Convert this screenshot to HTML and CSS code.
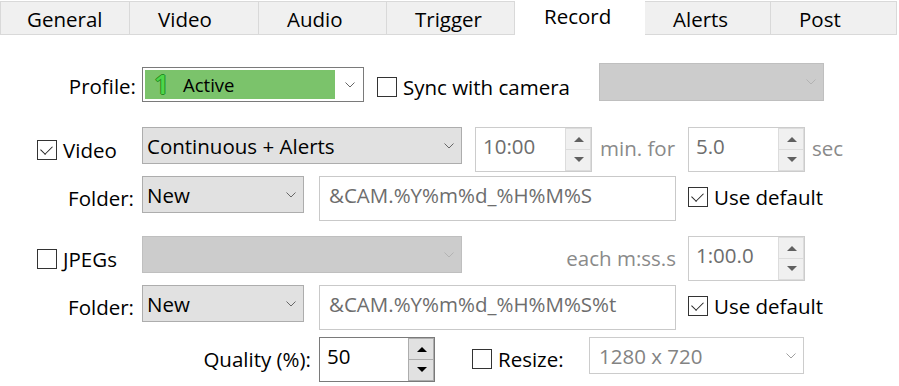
FILE: index.html
```html
<!DOCTYPE html>
<html lang="en">
<head>
    <meta charset="UTF-8">
    <title>Record</title>
    <link rel="stylesheet" href="styles.css">
</head>
<body>
    <div class="tabs">
        <div class="tab first">General</div>
        <div class="tab">Video</div>
        <div class="tab">Audio</div>
        <div class="tab">Trigger</div>
        <div class="tab active">Record</div>
        <div class="tab">Alerts</div>
        <div class="tab">Post</div>
    </div>

    <div class="panel">
        <!-- profile -->
        <div class="row row-profile">
            <div class="cell-label">Profile:</div>
            <div class="select profile">
                <div class="profile-fill"><span class="profile-num">1</span>Active</div>
                <svg class="chev" width="10" height="6" viewBox="0 0 10 6"><polyline points="0.5,0.5 5,5 9.5,0.5" fill="none" stroke="currentColor"/></svg>
            </div>
            <label class="check sync"><span class="box"></span>Sync with camera</label>
            <div class="select disabled camera">
                <span></span>
                <svg class="chev" width="10" height="6" viewBox="0 0 10 6"><polyline points="0.5,0.5 5,5 9.5,0.5" fill="none" stroke="currentColor"/></svg>
            </div>
        </div>

        <!-- video -->
        <div class="row row-video">
            <div class="cell-check"><label class="check"><span class="box checked"></span>Video</label></div>
            <div class="select wide"><span>Continuous + Alerts</span>
                <svg class="chev" width="10" height="6" viewBox="0 0 10 6"><polyline points="0.5,0.5 5,5 9.5,0.5" fill="none" stroke="currentColor"/></svg>
            </div>
            <div class="spin dim s-time"><span class="spin-val">10:00</span>
                <div class="spin-btns"><div class="btn up"></div><div class="btn down"></div></div>
            </div>
            <div class="gray min-for">min. for</div>
            <div class="spin dim"><span class="spin-val">5.0</span>
                <div class="spin-btns"><div class="btn up"></div><div class="btn down"></div></div>
            </div>
            <div class="gray sec">sec</div>
        </div>

        <div class="row row-folder">
            <div class="cell-label">Folder:</div>
            <div class="select short"><span>New</span>
                <svg class="chev" width="10" height="6" viewBox="0 0 10 6"><polyline points="0.5,0.5 5,5 9.5,0.5" fill="none" stroke="currentColor"/></svg>
            </div>
            <div class="field">&amp;CAM.%Y%m%d_%H%M%S</div>
            <label class="check use-def"><span class="box checked"></span>Use default</label>
        </div>

        <!-- jpegs -->
        <div class="row row-jpeg">
            <div class="cell-check"><label class="check"><span class="box"></span>JPEGs</label></div>
            <div class="select wide disabled"><span></span>
                <svg class="chev" width="10" height="6" viewBox="0 0 10 6"><polyline points="0.5,0.5 5,5 9.5,0.5" fill="none" stroke="currentColor"/></svg>
            </div>
            <div class="gray each">each m:ss.s</div>
            <div class="spin dim"><span class="spin-val">1:00.0</span>
                <div class="spin-btns"><div class="btn up"></div><div class="btn down"></div></div>
            </div>
        </div>

        <div class="row row-folder2">
            <div class="cell-label">Folder:</div>
            <div class="select short"><span>New</span>
                <svg class="chev" width="10" height="6" viewBox="0 0 10 6"><polyline points="0.5,0.5 5,5 9.5,0.5" fill="none" stroke="currentColor"/></svg>
            </div>
            <div class="field">&amp;CAM.%Y%m%d_%H%M%S%t</div>
            <label class="check use-def"><span class="box checked"></span>Use default</label>
        </div>

        <div class="row row-quality">
            <div class="cell-label quality">Quality (%):</div>
            <div class="spin active-spin"><span class="spin-val">50</span>
                <div class="spin-btns"><div class="btn up"></div><div class="btn down"></div></div>
            </div>
            <label class="check resize"><span class="box"></span>Resize:</label>
            <div class="select light res"><span>1280 x 720</span>
                <svg class="chev" width="10" height="6" viewBox="0 0 10 6"><polyline points="0.5,0.5 5,5 9.5,0.5" fill="none" stroke="currentColor"/></svg>
            </div>
        </div>
    </div>
</body>
</html>
```

FILE: styles.css
```css
body {
    margin: 0;
    background: #fff;
    color: #000;
    font-family: "Open Sans", "Noto Sans", sans-serif;
    font-size: 20.5px;
    width: 899px;
    height: 386px;
    overflow: hidden;
}

/* tab strip */
.tabs {
    display: grid;
    grid-template-columns: 130px 129px 128px 128px 130px 126px 126px;
    height: 35px;
}
.tab {
    box-sizing: border-box;
    margin-top: 1px;
    height: 34px;
    line-height: 34px;
    padding-left: 28px;
    background: #f0f0f0;
    border: 1px solid #d9d9d9;
    border-left: none;
}
.tab.first {
    border-left: 1px solid #d9d9d9;
    padding-left: 26px;
}
.tab.active {
    margin-top: 0;
    height: 35px;
    line-height: 32px;
    background: #fff;
    border: none;
    padding-left: 29px;
}

/* rows */
.row {
    display: flex;
    align-items: flex-start;
    height: 45px;
}
.row-profile { margin-top: 28px; height: 39px; }
.row-video { margin-top: 25px; }
.row-folder { margin-top: 4px; }
.row-jpeg { margin-top: 15px; height: 44px; }
.row-folder2 { margin-top: 5px; }
.row-quality { margin-top: 7px; height: 44px; }

.cell-label {
    width: 142px;
    box-sizing: border-box;
    padding-right: 8px;
    text-align: right;
    line-height: 45px;
    white-space: nowrap;
    flex: none;
}
.row-profile .cell-label { line-height: 39px; margin-top: 4px; padding-right: 6px; }
.cell-label.quality { width: 319px; }

.cell-check {
    width: 142px;
    padding-left: 37px;
    box-sizing: border-box;
    flex: none;
}

/* checkbox */
.check {
    display: flex;
    align-items: center;
    gap: 6px;
    height: 45px;
    white-space: nowrap;
}
.box {
    width: 20px;
    height: 20px;
    box-sizing: border-box;
    border: 1px solid #333;
    background: #fff;
    flex: none;
    position: relative;
}
.box.checked::after {
    content: "";
    position: absolute;
    left: 5px;
    top: 2px;
    width: 6px;
    height: 10px;
    border: solid #222;
    border-width: 0 1.5px 1.5px 0;
    transform: rotate(45deg);
}
.sync {
    width: 222px;
    margin-left: 13px;
    height: 39px;
    margin-top: 4px;
    box-sizing: border-box;
}
.use-def { margin-left: 12px; height: 45px; }
.row-folder .use-def, .row-folder2 .use-def { height: 42px; }
.resize { width: 117px; margin-left: 37px; height: 44px; flex: none; }

/* dropdowns */
.select {
    box-sizing: border-box;
    height: 37px;
    display: flex;
    align-items: center;
    justify-content: space-between;
    padding: 0 7px 0 4px;
    background: #e1e1e1;
    border: 1px solid #adadad;
    color: #666;
    flex: none;
}
.select span { color: #000; }
.select.wide { width: 320px; }
.select.short { width: 162px; }
.select.disabled {
    background: #cccccc;
    border-color: #bfbfbf;
    color: #b3b3b3;
}
.select.light {
    background: #fff;
    border-color: #cccccc;
    color: #a0a0a0;
    padding-left: 9px;
}
.select.light span { color: #838383; }
.select.camera {
    width: 225px;
    height: 38px;
}
.select.res { width: 215px; }

.select.profile {
    width: 222px;
    height: 35px;
    margin-top: 4px;
    background: #fff;
    border-color: #7a7a7a;
    padding: 2px 8px 2px 2px;
    align-items: stretch;
}
.profile-fill {
    width: 190px;
    background: #7bc36b;
    color: #000;
    display: flex;
    align-items: center;
    font-size: 18.5px;
    padding-left: 9px;
    box-sizing: border-box;
}
.select .profile-num {
    font-weight: 600;
    font-size: 27px;
    color: #4fd64a;
    text-shadow: 1px 0 0 #238c23, -1px 0 0 #238c23, 0 1px 0 #238c23, 0 -1px 0 #238c23;
    width: 29px;
    line-height: 1;
    margin-top: -2px;
}
.chev { align-self: center; flex: none; }

/* spinners */
.spin {
    box-sizing: border-box;
    height: 45px;
    width: 117px;
    border: 1px solid #cccccc;
    display: flex;
    justify-content: space-between;
    flex: none;
    background: #fff;
}
.spin-val {
    line-height: 36px;
    padding-left: 7px;
    color: #6d6d6d;
}
.s-time { margin-left: 13px; }
.spin-btns {
    width: 26px;
    display: flex;
    flex-direction: column;
}
.btn {
    flex: 1;
    background: #f0f0f0;
    border: 1px solid #dcdcdc;
    position: relative;
}
.btn.up { border-bottom: none; }
.btn::after {
    content: "";
    position: absolute;
    left: 8px;
    top: 8px;
    border-left: 5px solid transparent;
    border-right: 5px solid transparent;
}
.btn.up::after { border-bottom: 5px solid #606060; }
.btn.down::after { border-top: 5px solid #606060; top: 7px; }

.spin.active-spin {
    width: 116px;
    border-color: #7a7a7a;
}
.active-spin .spin-val { color: #000; }
.active-spin .btn { background: #e1e1e1; border-color: #adadad; }
.active-spin .btn.up::after { border-bottom-color: #000; }
.active-spin .btn.down::after { border-top-color: #000; }

/* plain grey captions */
.gray {
    color: #8a8a8a;
    line-height: 43px;
    white-space: nowrap;
    flex: none;
}
.min-for { width: 96px; box-sizing: border-box; padding-left: 8px; }
.sec { padding-left: 7px; }
.each {
    width: 226px;
    box-sizing: border-box;
    text-align: right;
    padding-right: 12px;
    line-height: 45px;
}

/* text fields */
.field {
    box-sizing: border-box;
    width: 357px;
    height: 45px;
    margin-left: 15px;
    border: 1px solid #c9c9c9;
    padding-left: 9px;
    line-height: 37px;
    color: #6d6d6d;
    white-space: nowrap;
    flex: none;
}
```
